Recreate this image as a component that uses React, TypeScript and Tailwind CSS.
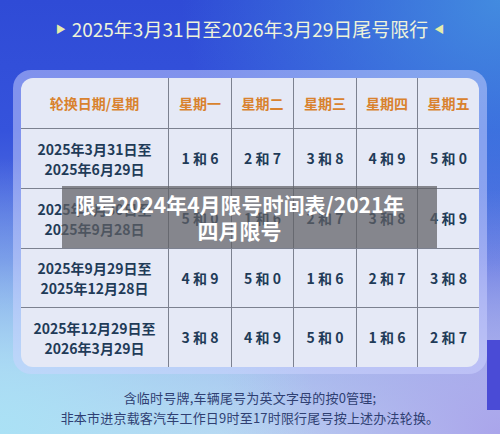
import React from "react";

const header = ["轮换日期/星期", "星期一", "星期二", "星期三", "星期四", "星期五"];
const rows: [string, string, string[]][] = [
  ["2025年3月31日至", "2025年6月29日", ["1 和 6", "2 和 7", "3 和 8", "4 和 9", "5 和 0"]],
  ["2025年6月30日至", "2025年9月28日", ["5 和 0", "1 和 6", "2 和 7", "3 和 8", "4 和 9"]],
  ["2025年9月29日至", "2025年12月28日", ["4 和 9", "5 和 0", "1 和 6", "2 和 7", "3 和 8"]],
  ["2025年12月29日至", "2026年3月29日", ["3 和 8", "4 和 9", "5 和 0", "1 和 6", "2 和 7"]],
];

export default function App() {
  return (
    <div
      className="relative w-[500px] h-[434px] overflow-hidden flex flex-col items-center bg-[radial-gradient(ellipse_at_100%_0%,rgba(70,150,225,0.85)_0%,rgba(70,150,225,0)_45%),radial-gradient(ellipse_at_0%_100%,rgba(170,225,245,1)_0%,rgba(170,225,245,0)_45%),radial-gradient(ellipse_at_100%_100%,rgba(170,165,235,1)_0%,rgba(170,165,235,0)_40%),linear-gradient(180deg,#2f4bd6_0%,#3553dc_30%,#5f78e2_60%,#a9c2ee_85%,#bcd6f2_100%)]"
      style={{ fontFamily: '"Noto Sans CJK SC", "Noto Sans", sans-serif' }}
    >
      {/* title */}
      <div className="mt-[14px] h-[30px] flex items-center gap-[6px] text-[#eef3da] text-[19px] leading-[30px]">
        <span className="text-[#e6ecaa] text-[10px]">▶</span>
        <span>2025年3月31日至2026年3月29日尾号限行</span>
        <span className="text-[#e6ecaa] text-[10px]">◀</span>
      </div>

      {/* frame */}
      <div className="mt-[26px] w-[474px] rounded-[18px] bg-[rgba(205,212,255,0.5)] p-[8px] pb-[7px]">
        <div className="rounded-[12px] bg-[#e5e9f6] overflow-hidden grid grid-cols-[148px_63px_62px_63px_61px_1fr] grid-rows-[51px_60px_60px_59px_59px]">
          {header.map((h, i) => (
            <div
              key={h}
              className={`flex items-center justify-center text-[14px] font-bold text-[#d9822e] border-b border-[#7c8190] ${i < 5 ? "border-r" : ""}`}
            >
              {h}
            </div>
          ))}
          {rows.map(([a, b, cells], ri) => (
            <React.Fragment key={a}>
              <div
                className={`flex flex-col items-center justify-center text-[14px] font-bold text-[#1f3b58] leading-[20px] border-r border-[#7c8190] ${ri < 3 ? "border-b" : ""}`}
              >
                <span>{a}</span>
                <span>{b}</span>
              </div>
              {cells.map((c, ci) => (
                <div
                  key={ci}
                  className={`flex items-center justify-center text-[14px] font-bold text-[#1f3b58] border-[#7c8190] ${ci < 4 ? "border-r" : ""} ${ri < 3 ? "border-b" : ""}`}
                >
                  {c}
                </div>
              ))}
            </React.Fragment>
          ))}
        </div>
      </div>

      {/* footer */}
      <div className="mt-[14px] flex flex-col items-center text-[13px] leading-[20px] text-[#2f3f72] tracking-[0.2px]">
        <span>含临时号牌,车辆尾号为英文字母的按0管理;</span>
        <span>非本市进京载客汽车工作日9时至17时限行尾号按上述办法轮换。</span>
      </div>

      {/* right edge strip */}
      <div className="absolute right-0 top-[340px] w-[13px] h-[70px] bg-[#4a4bd6]" />

      {/* overlay caption */}
      <div className="absolute left-[62px] top-[186px] w-[375px] h-[62px] bg-[rgba(95,95,100,0.72)] pl-[8px] pr-[28px] flex flex-col items-center justify-center text-white font-bold text-[21px] leading-[26px]">
        <span>限号2024年4月限号时间表/2021年</span>
        <span>四月限号</span>
      </div>
    </div>
  );
}
